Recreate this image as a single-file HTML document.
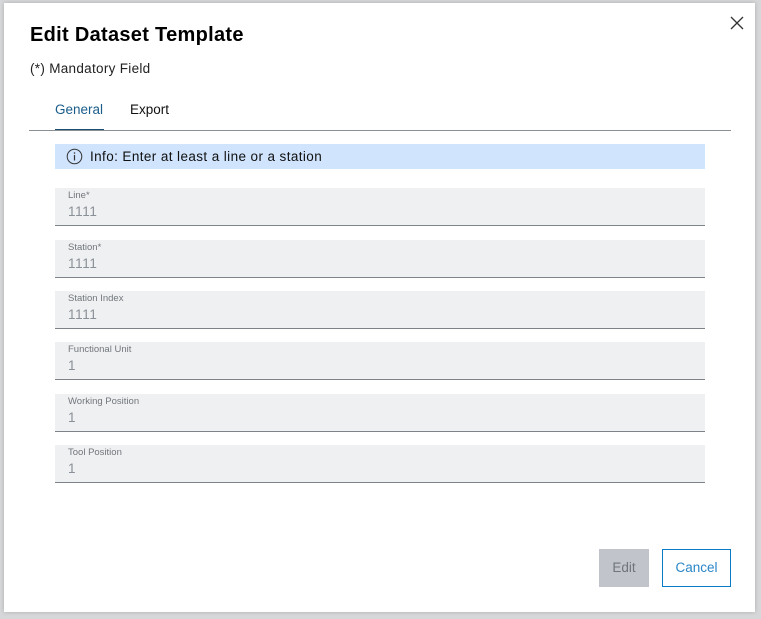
<!DOCTYPE html>
<html><head><style>
body{margin:0;width:761px;height:619px;background:#d6d7d9;font-family:"Liberation Sans",sans-serif;position:relative;overflow:hidden}
.dlg{position:absolute;left:4px;top:3px;width:751px;height:609px;background:#fff;box-shadow:0 0 4px rgba(0,0,0,.2)}
.a{position:absolute}
.f{position:absolute;left:51px;width:650px;height:37px;background:#eff0f1;border-bottom:1px solid #7d8389}
.f .l{position:absolute;left:13px;top:2px;font-size:9.5px;color:#71767c}
.f .v{position:absolute;left:13px;top:16px;font-size:13.5px;color:#8a9097;letter-spacing:.6px}
</style></head><body>
<div class="dlg">
<div class="a" style="left:26px;top:21px;font-size:20px;font-weight:bold;color:#000;letter-spacing:.3px">Edit Dataset Template</div>
<div class="a" style="left:26px;top:58px;font-size:13.5px;color:#222;letter-spacing:.3px">(*) Mandatory Field</div>
<svg class="a" style="left:725px;top:12px" width="16" height="16"><path d="M2 2L14 14M14 2L2 14" stroke="#333" stroke-width="1.3"/></svg>
<div class="a" style="left:51px;top:99px;font-size:13.5px;color:#1a5d8a">General</div>
<div class="a" style="left:51px;top:126px;width:49px;height:2px;background:#1a4e73"></div>
<div class="a" style="left:126px;top:99px;font-size:13.5px;color:#111">Export</div>
<div class="a" style="left:25px;top:127px;width:702px;height:1px;background:#8a8f94"></div>
<div class="a" style="left:51px;top:141px;width:650px;height:25px;background:#d0e4fd"></div>
<svg class="a" style="left:62px;top:145px" width="17" height="17"><circle cx="8.5" cy="8.5" r="7.3" fill="none" stroke="#333" stroke-width="1"/><path d="M8.5 7v5.5" stroke="#333" stroke-width="1.2"/><circle cx="8.5" cy="5" r=".8" fill="#333"/></svg>
<div class="a" style="left:86px;top:146px;font-size:13.5px;color:#111;letter-spacing:.4px">Info: Enter at least a line or a station</div>
<div class="f" style="top:185px"><div class="l">Line*</div><div class="v">1111</div></div>
<div class="f" style="top:237px"><div class="l">Station*</div><div class="v">1111</div></div>
<div class="f" style="top:288px"><div class="l">Station Index</div><div class="v">1111</div></div>
<div class="f" style="top:339px"><div class="l">Functional Unit</div><div class="v">1</div></div>
<div class="f" style="top:391px"><div class="l">Working Position</div><div class="v">1</div></div>
<div class="f" style="top:442px"><div class="l">Tool Position</div><div class="v">1</div></div>
<div class="a" style="left:595px;top:546px;width:50px;height:38px;background:#c1c5cb;color:#6f757b;font-size:13.5px;text-align:center;line-height:38px">Edit</div>
<div class="a" style="left:658px;top:546px;width:67px;height:36px;border:1px solid #0a7bc4;color:#2a86c6;font-size:13.5px;text-align:center;line-height:36px">Cancel</div>
</div>
</body></html>
